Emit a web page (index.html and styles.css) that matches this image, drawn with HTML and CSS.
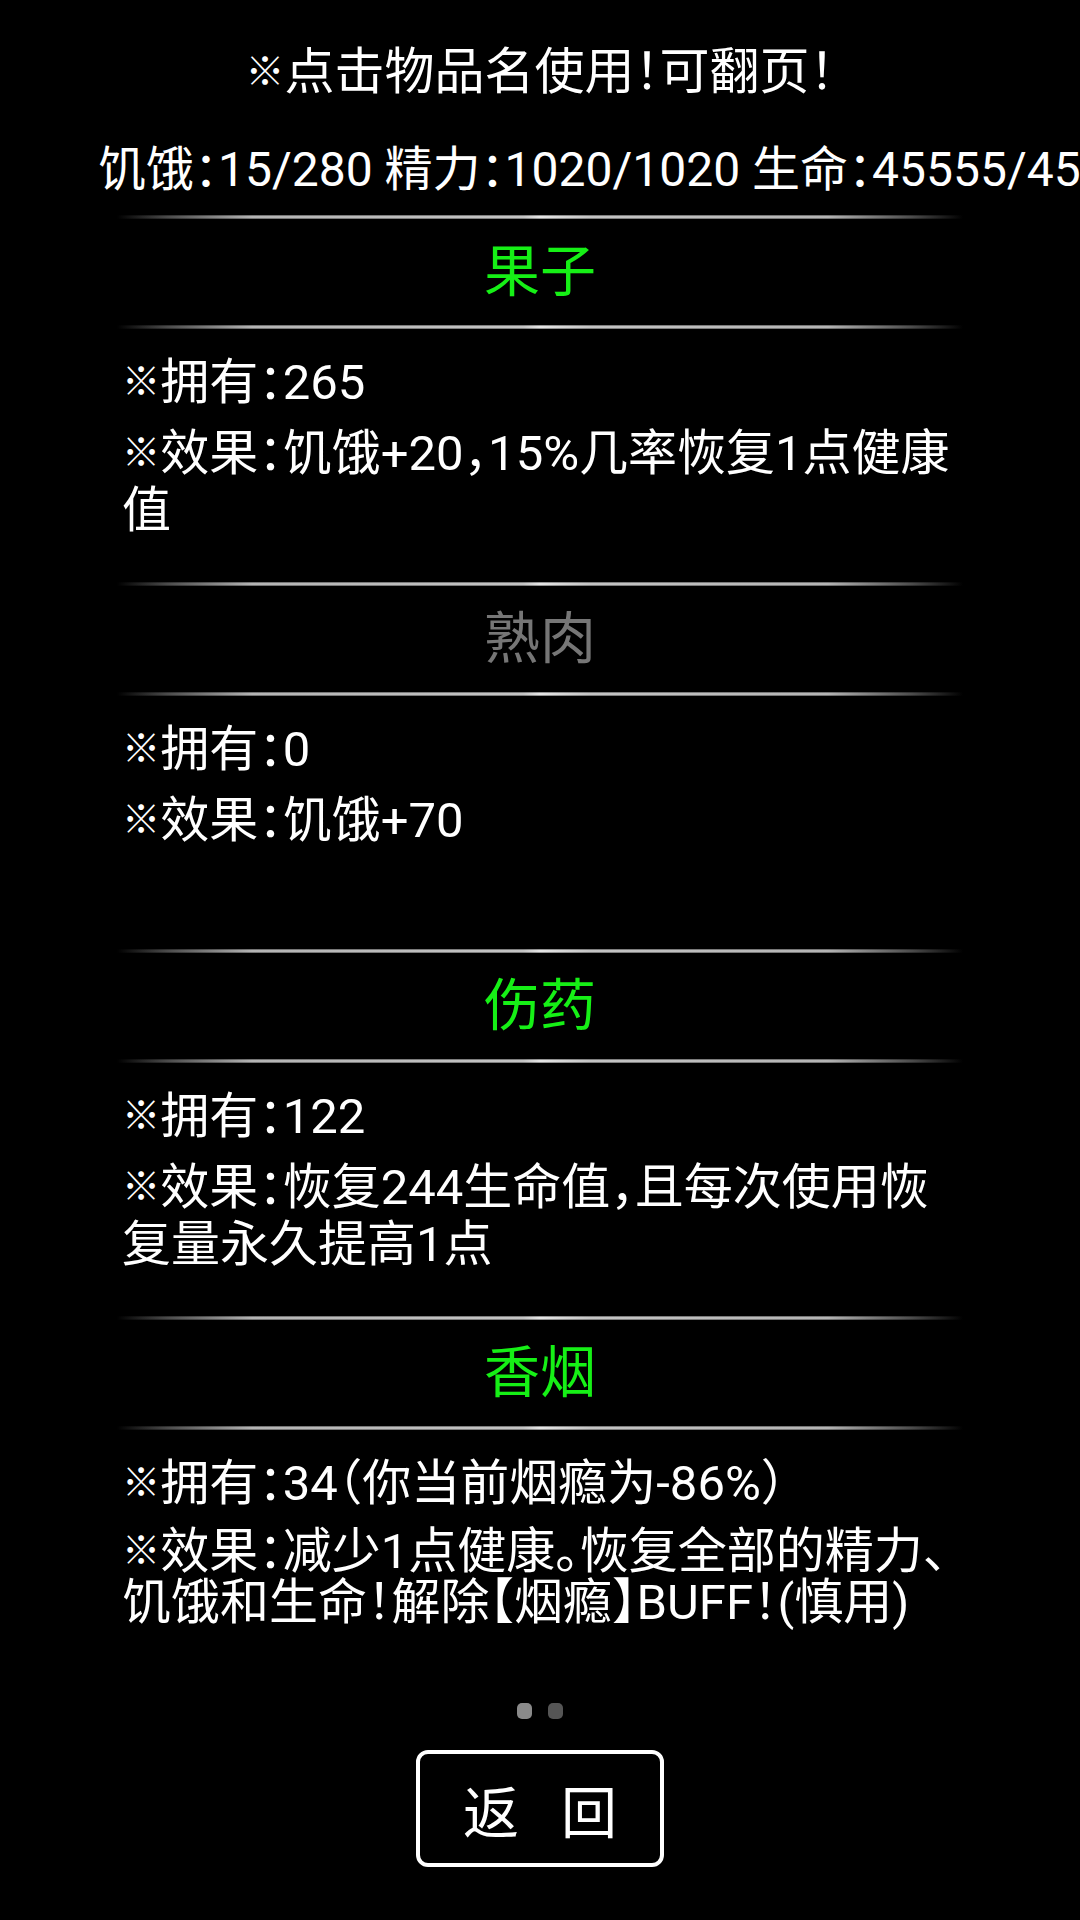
FILE: index.html
```html
<!DOCTYPE html>
<html lang="zh-CN">
<head>
<meta charset="utf-8">
<title>物品</title>
<link rel="stylesheet" href="styles.css">
</head>
<body>
<div class="screen">
  <header class="top">
    <div class="tip"><span class="mark">※</span>点击物品名使用！可翻页！</div>
    <div class="stats">饥饿：15/280 精力：1020/1020 生命：45555/45555</div>
  </header>
  <main class="items">
    <section class="item">
      <div class="sep"></div>
      <div class="name name-on">果子</div>
      <div class="sep"></div>
      <div class="info">
        <p><span class="mark">※</span>拥有：265</p>
        <p><span class="mark">※</span>效果：饥饿+20，15%几率恢复1点健康值</p>
      </div>
    </section>
    <section class="item">
      <div class="sep"></div>
      <div class="name name-off">熟肉</div>
      <div class="sep"></div>
      <div class="info">
        <p><span class="mark">※</span>拥有：0</p>
        <p><span class="mark">※</span>效果：饥饿+70</p>
      </div>
    </section>
    <section class="item">
      <div class="sep"></div>
      <div class="name name-on">伤药</div>
      <div class="sep"></div>
      <div class="info">
        <p><span class="mark">※</span>拥有：122</p>
        <p><span class="mark">※</span>效果：恢复244生命值，且每次使用恢复量永久提高1点</p>
      </div>
    </section>
    <section class="item">
      <div class="sep"></div>
      <div class="name name-on">香烟</div>
      <div class="sep"></div>
      <div class="info">
        <p><span class="mark">※</span>拥有：34（你当前烟瘾为-86%）</p>
        <p class="tight"><span class="mark">※</span>效果：减少1点健康。恢复全部的精力、饥饿和生命！解除【烟瘾】BUFF！(慎用)</p>
      </div>
    </section>
  </main>
  <div class="pager">
    <span class="dot dot-active"></span>
    <span class="dot"></span>
  </div>
  <div class="actions">
    <button class="back"><span>返</span><span>回</span></button>
  </div>
</div>
</body>
</html>
```
FILE: styles.css
```css
html, body {
  margin: 0;
  padding: 0;
  background: #000;
}

body {
  width: 1080px;
  height: 1920px;
  overflow: hidden;
  font-family: Roboto, "Noto Sans CJK SC", sans-serif;
  font-feature-settings: "halt" 1;
  color: #fff;
}

.mark {
  font-size: 0.78em;
  line-height: 1;
  vertical-align: 0.1em;
}

.top {
  padding-top: 42px;
}

.tip {
  font-size: 50px;
  line-height: 60px;
  text-align: center;
}

.stats {
  margin-top: 38px;
  padding-left: 98px;
  font-size: 48px;
  line-height: 60px;
  white-space: nowrap;
  overflow: hidden;
}

.items {
  margin: 15px 117px 0;
}

.item {
  height: 367px;
  display: flex;
  flex-direction: column;
}

.sep {
  height: 4px;
  flex: none;
  background:
    linear-gradient(to bottom, rgba(0,0,0,0.55) 0%, rgba(0,0,0,0) 35%, rgba(0,0,0,0) 65%, rgba(0,0,0,0.55) 100%),
    linear-gradient(to right, rgba(150,150,150,0) 0%, rgba(150,150,150,0.5) 6%, #b4b4b4 16%, #c4c4c4 48%, #e6e6e6 50%, #c4c4c4 56%, #b4b4b4 84%, rgba(150,150,150,0.5) 94%, rgba(150,150,150,0) 100%);
}

.name {
  height: 106px;
  line-height: 106px;
  flex: none;
  text-align: center;
  font-size: 56px;
}

.name-on {
  color: #16f016;
}

.name-off {
  color: #767676;
}

.info {
  flex: 1;
  padding: 25px 1px 0 5px;
  font-size: 49px;
  line-height: 57px;
}

.info p {
  margin: 0 0 14px;
}

.info p.tight {
  line-height: 51px;
}

.pager {
  display: flex;
  justify-content: center;
  gap: 16px;
  margin-top: 20px;
}

.dot {
  width: 15px;
  height: 16px;
  border-radius: 5px;
  background: #555;
}

.dot-active {
  background: #8a8a8a;
}

.actions {
  display: flex;
  justify-content: center;
  margin-top: 31px;
}

.back {
  width: 248px;
  height: 117px;
  box-sizing: border-box;
  border: 4px solid #fff;
  border-radius: 12px;
  background: #000;
  color: #fff;
  font-family: Roboto, "Noto Sans CJK SC", sans-serif;
  font-size: 56px;
  display: flex;
  align-items: center;
  justify-content: center;
  gap: 42px;
  padding: 0;
}
```
